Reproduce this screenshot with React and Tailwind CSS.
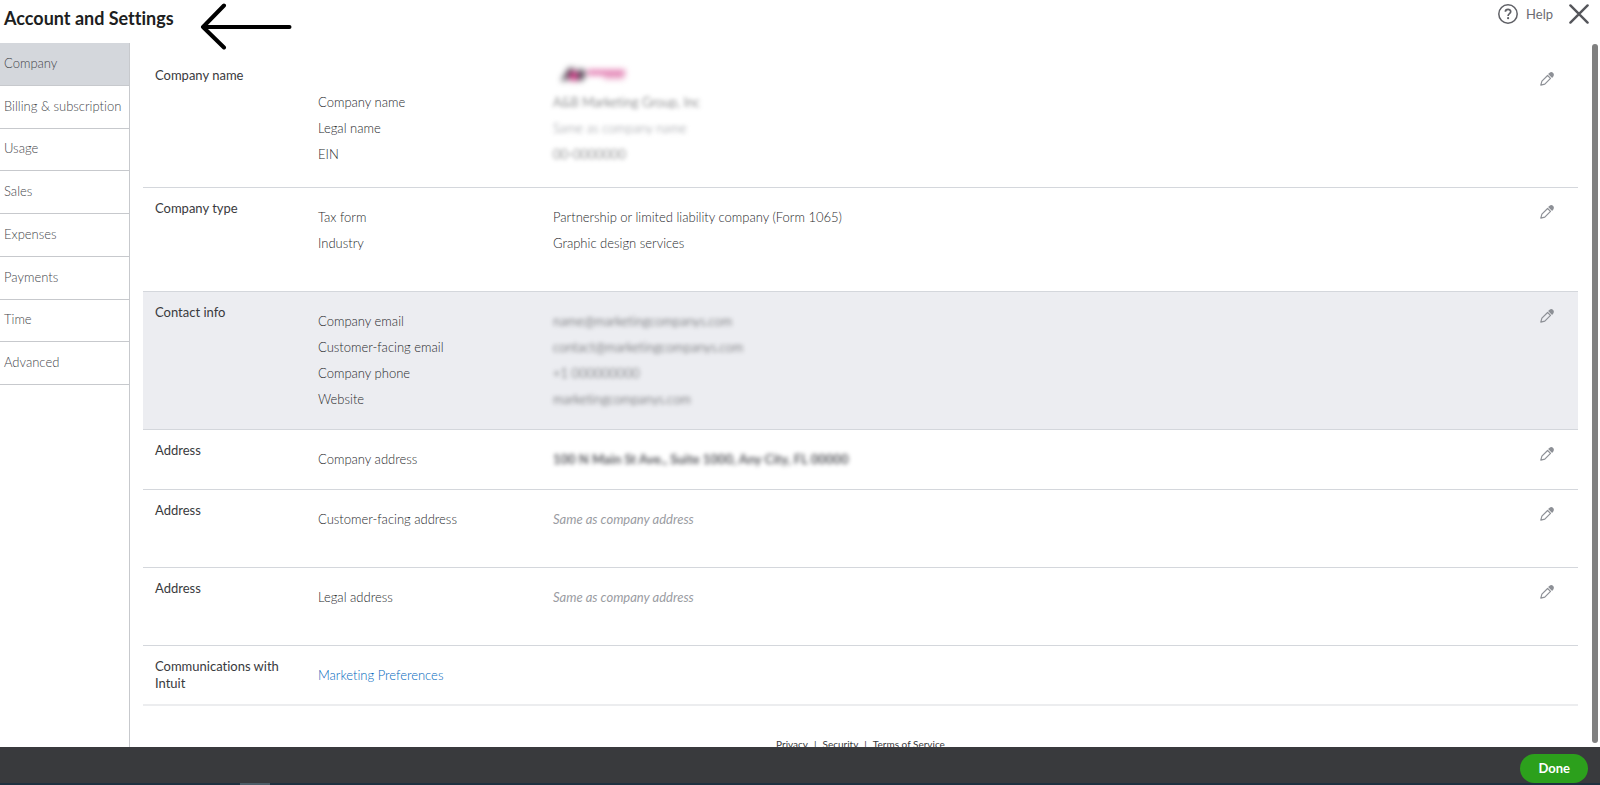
import React, { useState } from "react";

const navItems = [
  "Company",
  "Billing & subscription",
  "Usage",
  "Sales",
  "Expenses",
  "Payments",
  "Time",
  "Advanced",
];

const sections = [
  {
    title: "Company name",
    logo: true,
    rows: [
      { label: "Company name", value: "A&B Marketing Group, Inc", kind: "hidden" },
      { label: "Legal name", value: "Same as company name", kind: "hiddenLight" },
      { label: "EIN", value: "00-0000000", kind: "hidden" },
    ],
  },
  {
    title: "Company type",
    roomy: true,
    rows: [
      { label: "Tax form", value: "Partnership or limited liability company (Form 1065)" },
      { label: "Industry", value: "Graphic design services" },
    ],
  },
  {
    title: "Contact info",
    active: true,
    rows: [
      { label: "Company email", value: "name@marketingcompanys.com", kind: "hidden" },
      { label: "Customer-facing email", value: "contact@marketingcompanys.com", kind: "hidden" },
      { label: "Company phone", value: "+1 000000000", kind: "hidden" },
      { label: "Website", value: "marketingcompanys.com", kind: "hidden" },
    ],
  },
  {
    title: "Address",
    rows: [
      {
        label: "Company address",
        value: "100 N Main St Ave., Suite 1000, Any City, FL 00000",
        kind: "hiddenBold",
      },
    ],
  },
  {
    title: "Address",
    roomy: true,
    rows: [{ label: "Customer-facing address", value: "Same as company address", kind: "hint" }],
  },
  {
    title: "Address",
    roomy: true,
    rows: [{ label: "Legal address", value: "Same as company address", kind: "hint" }],
  },
];

const valueStyles = {
  plain: "font-light text-[#292a2d]",
  hint: "italic text-[#9a9ca2]",
  hidden: "font-light text-[#393a3d] blur-[2px] select-none",
  hiddenLight: "font-light text-[#8d9096] blur-[2px] select-none",
  hiddenBold: "font-bold text-[#55565b] blur-[2px] select-none",
};

const PencilIcon = () => (
  <svg className="h-[14px] w-[14px]" viewBox="0 0 14 14" fill="none">
    <path
      d="M0.8 13.2 L1.9 9.2 L7.6 3.5 L10.5 6.4 L4.8 12.1 Z"
      stroke="#8d9096"
      strokeWidth="1.2"
      strokeLinejoin="round"
    />
    <path
      d="M8.1 1.9 L9.6 0.7 C10.8 -0.2 12.2 0 13.1 0.9 C14 1.8 14.2 3.2 13.3 4.4 L12.1 5.9 Z"
      fill="#8d9096"
    />
  </svg>
);

// Company logo thumbnail, obscured like the other private values
const CompanyLogo = () => (
  <svg className="ml-2 h-[18px] w-16 blur-[3px]" viewBox="0 0 64 18">
    <path d="M0 16 L8 3 H13 V16 H9 V13 H6 L4 16 Z" fill="#3a3440" />
    <circle cx="13" cy="11" r="5" fill="#d6418c" />
    <path d="M17 4 H20 C25 4 26 14 19 16 H17 Z" fill="#4a4450" />
    <rect x="26" y="5" width="38" height="5" fill="#e070aa" />
    <rect x="43" y="9" width="20" height="5" fill="#e9a9c9" />
  </svg>
);

const Section = ({ section }) => (
  <section
    className={`flex border-b border-[#d4d7dc] pl-3 pr-6 ${
      section.active ? "bg-[#ecedf1]" : ""
    }`}
  >
    <h2 className="w-[163px] shrink-0 pt-3 pr-6 text-[13px] leading-[17px] text-[#393a3d]">
      {section.title}
    </h2>
    <div
      className={`min-w-0 flex-1 ${section.logo ? "pt-[10px]" : "pt-4"} ${
        section.roomy ? "pb-[35px]" : section.logo ? "pb-5" : "pb-[17px]"
      }`}
    >
      {section.logo && (
        <div className="flex h-6">
          <div className="w-[235px] shrink-0" />
          <CompanyLogo />
        </div>
      )}
      <dl>
        {section.rows.map((row) => (
          <div key={row.label} className="flex text-[13px] leading-[26px]">
            <dt className="w-[235px] shrink-0 font-light text-[#292a2d]">{row.label}</dt>
            <dd className={valueStyles[row.kind || "plain"]}>{row.value}</dd>
          </div>
        ))}
      </dl>
    </div>
    <button type="button" aria-label={`Edit ${section.title}`} className="mt-[17px] h-[14px] shrink-0">
      <PencilIcon />
    </button>
  </section>
);

const App = () => {
  const [active, setActive] = useState("Company");

  return (
    <div className="flex h-screen flex-col overflow-hidden bg-white font-['Lato',sans-serif] [font-variant-ligatures:none]">
      {/* Header */}
      <header className="flex h-[43px] shrink-0 items-start justify-between pl-1 pr-[11px]">
        <div className="flex items-start gap-[26px]">
          <h1 className="pt-[7px] text-[18px] leading-[22px] font-bold text-[#1d1e21]">
            Account and Settings
          </h1>
          <svg
            className="h-[50px] w-[92px]"
            viewBox="0 0 92 50"
            fill="none"
            stroke="#000"
            strokeWidth="4"
            strokeLinecap="round"
            strokeLinejoin="round"
          >
            <path d="M24 5.5 L3 27 L24 47.5 M3 27 H89.5" />
          </svg>
        </div>
        <div className="flex items-center gap-4 pt-1">
          <button type="button" className="flex items-center gap-2 text-[13px] leading-5 text-[#6b6c72]">
            <svg className="h-5 w-5" viewBox="0 0 20 20" fill="none" stroke="#5f6066">
              <circle cx="10" cy="10" r="9.2" strokeWidth="1.5" />
              <path
                d="M7.4 7.8 C7.4 4.6 12.7 4.6 12.7 7.7 C12.7 9.7 10.1 9.6 10.1 11.9"
                strokeWidth="1.7"
              />
              <circle cx="10.1" cy="14.2" r="1.1" fill="#5f6066" stroke="none" />
            </svg>
            Help
          </button>
          <button type="button" aria-label="Close">
            <svg className="h-5 w-5" viewBox="0 0 20 20" stroke="#55565b" strokeWidth="2.4" strokeLinecap="round">
              <path d="M1.4 1.4 L18.6 18.6 M18.6 1.4 L1.4 18.6" />
            </svg>
          </button>
        </div>
      </header>

      <div className="flex min-h-0 flex-1">
        {/* Sidebar */}
        <nav className="w-[130px] shrink-0 border-r border-[#c7c9cd]">
          <ul className="grid h-[342px] auto-rows-fr">
            {navItems.map((item) => (
              <li key={item} className="border-b border-[#c7c9cd]">
                <button
                  type="button"
                  onClick={() => setActive(item)}
                  className={`h-full w-full pb-[2px] pl-1 text-left text-[13px] leading-5 font-light whitespace-nowrap text-[#45464b] ${
                    active === item ? "bg-[#d4d7dc]" : ""
                  }`}
                >
                  {item}
                </button>
              </li>
            ))}
          </ul>
        </nav>

        {/* Settings */}
        <main className="min-w-0 flex-1 overflow-hidden pt-3 pr-[14px] pl-[13px]">
          {sections.map((section, i) => (
            <Section key={i} section={section} />
          ))}
          <section className="flex border-b-2 border-[#ecedef] pl-3">
            <h2 className="w-[163px] shrink-0 pt-3 pr-6 text-[13px] leading-[17px] text-[#393a3d]">
              Communications with Intuit
            </h2>
            <div className="pt-4 pb-4 text-[13px] leading-[26px]">
              <a href="#marketing" className="font-light text-[#0068bd]">
                Marketing Preferences
              </a>
            </div>
          </section>
          <div className="flex justify-center gap-[6px] pt-[31px] text-[10px] leading-[14px] text-[#393a3d]">
            <a href="#privacy">Privacy</a>
            <span>|</span>
            <a href="#security">Security</a>
            <span>|</span>
            <a href="#terms">Terms of Service</a>
          </div>
        </main>

        {/* Scroll track */}
        <div className="flex w-2 shrink-0 pt-px pr-[2px] pb-1">
          <div className="flex-1 rounded-full bg-[#808080]" />
        </div>
      </div>

      {/* Bottom bar */}
      <footer className="shrink-0 bg-[#393a3d]">
        <div className="flex justify-end pt-[7px] pr-3">
          <button
            type="button"
            className="rounded-full bg-[#2ca01c] px-[18px] text-[13px] leading-[29px] font-bold text-white"
          >
            Done
          </button>
        </div>
        <div className="h-[2px] bg-[#1f3140] pl-60">
          <div className="h-full w-[30px] bg-[#4d5d68]" />
        </div>
      </footer>
    </div>
  );
};

export default App;
